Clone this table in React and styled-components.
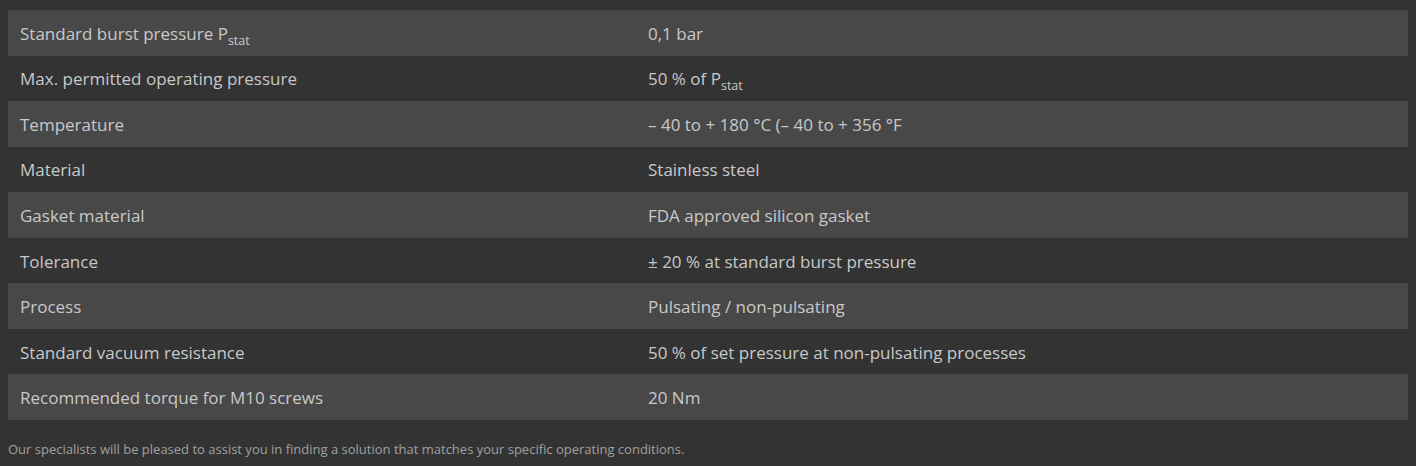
import React from "react";
import styled, { createGlobalStyle } from "styled-components";

const rows = [
  [<>Standard burst pressure P<sub>stat</sub></>, <>0,1 bar</>],
  [<>Max. permitted operating pressure</>, <>50 % of P<sub>stat</sub></>],
  [<>Temperature</>, <>– 40 to + 180 °C (– 40 to + 356 °F</>],
  [<>Material</>, <>Stainless steel</>],
  [<>Gasket material</>, <>FDA approved silicon gasket</>],
  [<>Tolerance</>, <>± 20 % at standard burst pressure</>],
  [<>Process</>, <>Pulsating / non-pulsating</>],
  [<>Standard vacuum resistance</>, <>50 % of set pressure at non-pulsating processes</>],
  [<>Recommended torque for M10 screws</>, <>20 Nm</>],
];

const App = () => {
  return (
    <Wrapper>
      <Table>
        <colgroup>
          <col style={{ width: 628 }} />
          <col />
        </colgroup>
        <tbody>
          {rows.map(([label, value], i) => (
            <Row key={i} $odd={i % 2 === 0}>
              <td>{label}</td>
              <td>{value}</td>
            </Row>
          ))}
        </tbody>
      </Table>
      <Note>
        Our specialists will be pleased to assist you in finding a solution that
        matches your specific operating conditions.
      </Note>
    </Wrapper>
  );
};

const GlobalStyle = createGlobalStyle`
  body {
    margin: 0;
    background: #333333;
    font-family: "Open Sans", "Liberation Sans", sans-serif;
  }
`;

const Wrapper = styled.div`
  padding: 10px 8px 0;
`;

const Table = styled.table`
  width: 100%;
  border-collapse: collapse;
  table-layout: fixed;
  font-size: 17px;
  color: #c8c8c8;
  td {
    padding: 2px 12px 0;
    height: 45.56px;
    box-sizing: border-box;
    vertical-align: middle;
    line-height: 24px;
  }
  sub {
    font-size: 12.5px;
    line-height: 0;
    vertical-align: -5px;
  }
`;

const Row = styled.tr`
  background: ${(p) => (p.$odd ? "#484848" : "transparent")};
`;

const Note = styled.p`
  margin: 20px 0 0;
  font-size: 13px;
  line-height: 18px;
  color: #a0a0a0;
`;

export default function Root() {
  return (
    <>
      <GlobalStyle />
      <App />
    </>
  );
}
